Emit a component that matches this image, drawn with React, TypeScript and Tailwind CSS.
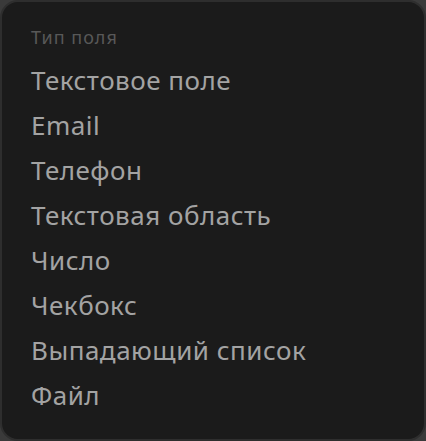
import React from "react";

const FIELD_TYPES = [
  "Текстовое поле",
  "Email",
  "Телефон",
  "Текстовая область",
  "Число",
  "Чекбокс",
  "Выпадающий список",
  "Файл",
];

export default function App() {
  return (
    <div className="w-[426px] h-[441px] bg-[#3a3a3a]">
      <div
        className="h-full rounded-[18px] border-2 border-[#2e2e2e] bg-[#1b1b1b] pl-[29px] pt-[23px]"
        style={{ fontFamily: "'Noto Sans', sans-serif" }}
      >
        <div className="text-[18px] leading-[24px] tracking-[1px] text-[#585858]">Тип поля</div>
        <ul className="mt-[9px]">
          {FIELD_TYPES.map((t) => (
            <li key={t} className="text-[26px] leading-[45px] tracking-[0.5px] text-[#a3a3a3]">
              {t}
            </li>
          ))}
        </ul>
      </div>
    </div>
  );
}
